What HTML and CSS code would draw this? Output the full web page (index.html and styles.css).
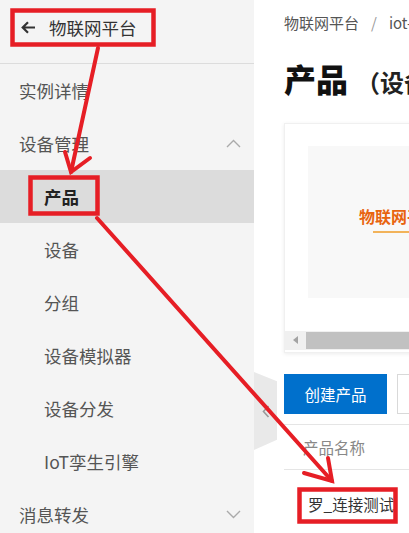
FILE: index.html
```html
<!DOCTYPE html>
<html lang="zh-CN">
<head>
    <meta charset="UTF-8">
    <meta name="viewport" content="width=device-width, initial-scale=1.0">
    <title>物联网平台 - 产品</title>
    <link rel="stylesheet" href="styles.css">
</head>
<body>
<div class="app">

    <aside class="sidebar">
        <div class="side-head">
            <svg class="back-icon" width="15" height="13" viewBox="0 0 15 13">
                <path d="M14 6.5H2 M7 1.2 L1.7 6.5 L7 11.8" fill="none" stroke="#333" stroke-width="2.2"/>
            </svg>
            <span>物联网平台</span>
        </div>
        <ul class="menu">
            <li class="menu-item">实例详情</li>
            <li class="menu-item">设备管理
                <svg class="chevron" width="15" height="9" viewBox="0 0 15 9"><path d="M1 8 L7.5 1.5 L14 8" fill="none" stroke="#aaa" stroke-width="1.4"/></svg>
            </li>
            <li class="menu-item sub active">产品</li>
            <li class="menu-item sub">设备</li>
            <li class="menu-item sub">分组</li>
            <li class="menu-item sub">设备模拟器</li>
            <li class="menu-item sub">设备分发</li>
            <li class="menu-item sub">IoT孪生引擎</li>
            <li class="menu-item">消息转发
                <svg class="chevron" width="15" height="9" viewBox="0 0 15 9"><path d="M1 1 L7.5 7.5 L14 1" fill="none" stroke="#aaa" stroke-width="1.4"/></svg>
            </li>
        </ul>
    </aside>

    <main class="main">
        <div class="collapse-tab">
            <svg width="8" height="13" viewBox="0 0 8 13"><path d="M6.5 1 L1.5 6.5 L6.5 12" fill="none" stroke="#999" stroke-width="1.6"/></svg>
        </div>

        <div class="crumb">物联网平台<span class="sep">/</span>iot-cn</div>
        <h1 class="title">产品<small>（设备）</small></h1>

        <div class="banner">
            <div class="banner-inner">
                <div class="banner-title">物联网平台</div>
            </div>
            <div class="scrollbar">
                <span class="sb-btn"></span>
                <span class="sb-thumb"></span>
            </div>
        </div>

        <div class="toolbar">
            <button class="btn btn-primary">创建产品</button>
            <button class="btn">快速入门</button>
        </div>

        <table class="table">
            <thead>
                <tr><th>产品名称</th></tr>
            </thead>
            <tbody>
                <tr><td>罗_连接测试</td></tr>
            </tbody>
        </table>
    </main>

    <!-- red annotation marks drawn over the screenshot -->
    <svg class="marks" width="409" height="533" viewBox="0 0 409 533">
        <g fill="none" stroke="#e61e25" stroke-width="4.5" stroke-linejoin="miter">
            <rect x="12.5" y="10.5" width="141" height="34"/>
            <rect x="30.5" y="177.5" width="67" height="36"/>
            <rect x="299.5" y="489.5" width="96" height="32"/>
        </g>
        <g fill="none" stroke="#e61e25" stroke-width="4" stroke-linecap="round">
            <path d="M98 48 L71 172"/>
            <path d="M65 152 L71 172 L90 158"/>
            <path d="M97 218 L332 481"/>
            <path d="M304 473 L332 481 L328 458"/>
        </g>
    </svg>
</div>
</body>
</html>
```

FILE: styles.css
```css
* {
    box-sizing: border-box;
}
body {
    margin: 0;
    font-family: "Noto Sans CJK SC", "Noto Sans", sans-serif;
    background: #fff;
    color: #333;
}
.app {
    position: relative;
    display: flex;
    width: 409px;
    height: 533px;
    overflow: hidden;
}

/* sidebar */
.sidebar {
    flex: none;
    width: 254px;
    background: #f4f4f4;
}
.side-head {
    height: 64px;
    display: flex;
    align-items: center;
    gap: 13px;
    padding: 0 0 8px 21px;
    border-bottom: 1px solid #dcdcdc;
    font-size: 17.5px;
    color: #333;
}
.menu {
    list-style: none;
    margin: 0;
    padding: 0;
}
.menu-item {
    height: 53px;
    display: flex;
    align-items: center;
    justify-content: space-between;
    padding: 0 13px 0 19px;
    font-size: 17.5px;
    color: #555;
}
.menu-item.sub {
    padding-left: 44px;
}
.menu-item.active {
    background: #dcdcdc;
    font-weight: bold;
    color: #222;
}

/* main area */
.main {
    position: relative;
    flex: 1;
    min-width: 0;
    padding-left: 30px;
    overflow: hidden;
}
.collapse-tab {
    position: absolute;
    left: 0;
    top: 372px;
    width: 23px;
    height: 78px;
    background: #e9e9e9;
    clip-path: polygon(0 0, 100% 12%, 100% 87%, 0 100%);
    display: flex;
    align-items: center;
    padding-left: 8px;
}
.crumb {
    margin-top: 13px;
    line-height: 20px;
    font-size: 15px;
    color: #555;
    white-space: nowrap;
}
.crumb .sep {
    margin: 0 12px;
    color: #999;
}
.title {
    margin: 24px 0 0;
    line-height: 42px;
    font-size: 32px;
    font-weight: 900;
    color: #111;
    white-space: nowrap;
}
.title small {
    margin-left: 8px;
    font-size: 24px;
    font-weight: 700;
    color: #222;
}

.banner {
    width: 600px;
    height: 230px;
    margin-top: 20px;
    padding: 22px 0 0 23px;
    border: 1px solid #f0f0f0;
    box-shadow: 0 1px 4px rgba(0,0,0,0.08);
    background: #fff;
}
.banner-inner {
    height: 152px;
    background: #f8f8f8;
    padding: 58px 0 0 51px;
}
.banner-title {
    display: inline-block;
    font-size: 16px;
    font-weight: bold;
    line-height: 20px;
    color: #e8640f;
    padding-bottom: 5px;
    border-bottom: 2px solid #f2b35a;
    border-image: linear-gradient(to right, transparent 0 15px, #f2b35a 15px) 1;
}
.scrollbar {
    display: flex;
    height: 19px;
    margin: 33px 0 0 -23px;
    background: #f0f0f0;
    padding: 1px 0;
}
.sb-btn {
    width: 21px;
    position: relative;
}
.sb-btn::after {
    content: "";
    position: absolute;
    left: 8px;
    top: 4px;
    border-style: solid;
    border-width: 4.5px 5px 4.5px 0;
    border-color: transparent #a3a3a3 transparent transparent;
}
.sb-thumb {
    flex: 1;
    background: #c1c1c1;
}

.toolbar {
    display: flex;
    gap: 10px;
    margin-top: 21px;
}
.btn {
    flex: none;
    height: 40px;
    padding: 0 22px;
    border: 1px solid #d9d9d9;
    background: #fff;
    font-family: inherit;
    font-size: 15.5px;
    color: #333;
    white-space: nowrap;
}
.btn-primary {
    width: 103px;
    padding: 0;
    border-color: #0070cc;
    background: #0070cc;
    color: #fff;
}

.table {
    width: 600px;
    margin-top: 10px;
    border-collapse: collapse;
    font-size: 15.5px;
}
.table th {
    height: 45px;
    padding: 0 0 0 19px;
    border-top: 1px solid #e5e5e5;
    border-bottom: 1px solid #e5e5e5;
    text-align: left;
    font-weight: normal;
    color: #888;
}
.table td {
    height: 68px;
    padding: 0 0 0 24px;
    color: #333;
}

.marks {
    position: absolute;
    left: 0;
    top: 0;
    pointer-events: none;
}
```
